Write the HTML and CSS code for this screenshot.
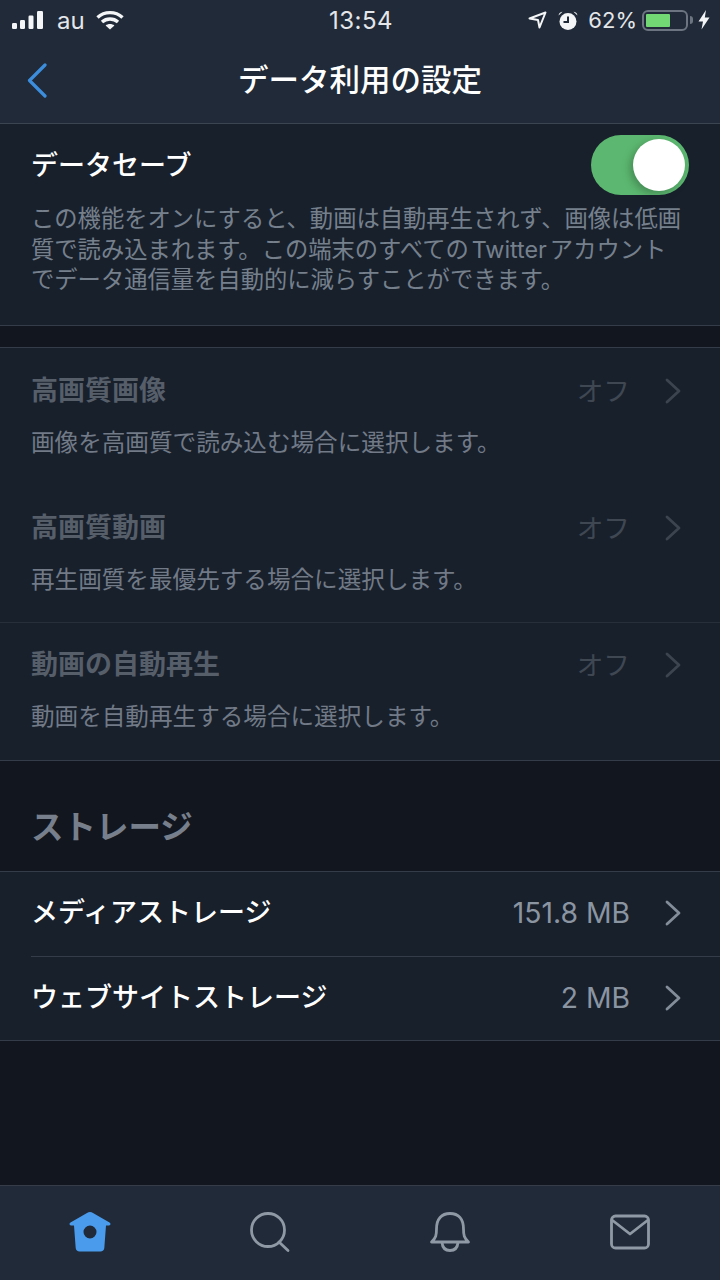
FILE: index.html
```html
<!DOCTYPE html>
<html lang="ja">

<head>
  <meta charset="UTF-8" />
  <meta name="viewport" content="width=device-width, initial-scale=1" />
  <title>データ利用の設定</title>
  <link rel="stylesheet" href="styles.css">
</head>

<body>
  <div class="app">
    <header class="top-bar">
      <div class="status-bar">
        <div class="status-left">
          <svg class="ic-signal" width="32" height="20" viewBox="0 0 32 20">
            <rect x="0" y="13" width="5" height="6" rx="1.2" />
            <rect x="8" y="10" width="5" height="9" rx="1.2" />
            <rect x="16.5" y="5.5" width="5" height="13.5" rx="1.2" />
            <rect x="25" y="1" width="6" height="18" rx="1.2" />
          </svg>
          <span class="carrier">au</span>
          <svg class="ic-wifi" width="28" height="20" viewBox="0 0 28 20">
            <path d="M1.5 7.5 C8.5 1 19.5 1 26.5 7.5" />
            <path d="M6 12 C10.5 8 17.5 8 22 12" />
            <path class="wifi-dot" d="M14 19.5 L9.6 15.4 C12 13.4 16 13.4 18.4 15.4 Z" />
          </svg>
        </div>
        <div class="status-time">13:54</div>
        <div class="status-right">
          <svg width="19" height="18" viewBox="0 0 19 18">
            <path class="ic-line" d="M1.5 7.5 L17.5 1.5 L11.5 16.5 L10 9 Z" />
          </svg>
          <svg class="ic-alarm" width="20" height="19" viewBox="0 0 20 19">
            <circle cx="10" cy="10.5" r="8.5" />
            <path class="alarm-hand" d="M10 5.5 V11 H5.5" />
            <path d="M0.5 4.5 C1 2 2.5 1 4.5 0.8 Z" />
            <path d="M19.5 4.5 C19 2 17.5 1 15.5 0.8 Z" />
          </svg>
          <span class="battery-pct">62%</span>
          <div class="battery">
            <div class="battery-fill" style="width: 62%"></div>
          </div>
          <div class="battery-nub"></div>
          <svg class="ic-bolt" width="12" height="20" viewBox="0 0 12 20">
            <path d="M8 0 L0.5 11.5 H5 L3.5 19.5 L11.5 7.5 H6.8 Z" />
          </svg>
        </div>
      </div>

      <nav class="nav-bar">
        <a class="back-btn" href="#">
          <svg width="20" height="35" viewBox="0 0 20 35">
            <path d="M18 2 L2.5 17.5 L18 33" />
          </svg>
        </a>
        <h1 class="nav-title">データ利用の設定</h1>
      </nav>
    </header>

    <section class="group group-save">
      <div class="row-head">
        <div class="row-title">データセーブ</div>
        <div class="toggle">
          <div class="toggle-knob"></div>
        </div>
      </div>
      <p class="save-desc">この機能をオンにすると、動画は自動再生されず、画像は低画質で読み込まれます。この端末のすべての<span class="latin">Twitter</span>アカウントでデータ通信量を自動的に減らすことができます。</p>
    </section>

    <section class="group group-quality">
      <div class="quality-row">
        <div class="row-head">
          <div class="row-title">高画質画像</div>
          <div class="row-value">オフ</div>
          <svg class="chevron" width="16" height="26" viewBox="0 0 16 26">
            <path d="M2 2 L14 13 L2 24" />
          </svg>
        </div>
        <p class="quality-desc">画像を高画質で読み込む場合に選択します。</p>
      </div>
      <div class="quality-row">
        <div class="row-head">
          <div class="row-title">高画質動画</div>
          <div class="row-value">オフ</div>
          <svg class="chevron" width="16" height="26" viewBox="0 0 16 26">
            <path d="M2 2 L14 13 L2 24" />
          </svg>
        </div>
        <p class="quality-desc">再生画質を最優先する場合に選択します。</p>
      </div>
      <div class="quality-row has-line">
        <div class="row-head">
          <div class="row-title">動画の自動再生</div>
          <div class="row-value">オフ</div>
          <svg class="chevron" width="16" height="26" viewBox="0 0 16 26">
            <path d="M2 2 L14 13 L2 24" />
          </svg>
        </div>
        <p class="quality-desc">動画を自動再生する場合に選択します。</p>
      </div>
    </section>

    <h2 class="section-label">ストレージ</h2>

    <section class="group group-storage">
      <a class="storage-row" href="#">
        <span class="row-title">メディアストレージ</span>
        <span class="storage-value">151.8 MB</span>
        <svg class="chevron" width="16" height="26" viewBox="0 0 16 26">
          <path d="M2 2 L14 13 L2 24" />
        </svg>
      </a>
      <a class="storage-row has-line" href="#">
        <span class="row-title">ウェブサイトストレージ</span>
        <span class="storage-value">2 MB</span>
        <svg class="chevron" width="16" height="26" viewBox="0 0 16 26">
          <path d="M2 2 L14 13 L2 24" />
        </svg>
      </a>
    </section>

    <div class="spacer"></div>

    <footer class="tab-bar">
      <a class="tab" href="#">
        <svg width="44" height="42" viewBox="0 0 44 42">
          <path class="home-fill" fill-rule="evenodd" d="M22 1 C23 1 24 1.4 25 2 L41.5 11.5 C43 12.4 42.8 14.4 41 14.4 H38 L36.3 37 C36.1 39.3 34.6 40.5 32.5 40.5 H11.5 C9.4 40.5 7.9 39.3 7.7 37 L6 14.4 H3 C1.2 14.4 1 12.4 2.5 11.5 L19 2 C20 1.4 21 1 22 1 Z M22 14.5 A6.5 6.5 0 1 0 22 27.5 A6.5 6.5 0 1 0 22 14.5 Z" />
        </svg>
      </a>
      <a class="tab" href="#">
        <svg class="ic-tab" width="44" height="42" viewBox="0 0 44 42">
          <circle cx="20" cy="19" r="16.5" />
          <path d="M31 31 L40 39.5" />
        </svg>
      </a>
      <a class="tab" href="#">
        <svg class="ic-tab" width="44" height="42" viewBox="0 0 44 42">
          <path d="M3.5 31 C8 27 8.5 24 8.5 18 C8.5 8 13.5 2.5 22 2.5 C30.5 2.5 35.5 8 35.5 18 C35.5 24 36 27 40.5 31 Z" />
          <path d="M14 31.5 C14.5 37 17.5 39.5 22 39.5 C26.5 39.5 29.5 37 30 31.5" />
        </svg>
      </a>
      <a class="tab" href="#">
        <svg class="ic-tab" width="44" height="42" viewBox="0 0 44 42">
          <rect x="3.5" y="5" width="37" height="32" rx="4" />
          <path d="M4 9 L22 23 L40 9" />
        </svg>
      </a>
    </footer>
  </div>
</body>

</html>
```

FILE: styles.css
```css
* {
  margin: 0;
  padding: 0;
  box-sizing: border-box;
  font-family: Inter, "Noto Sans CJK JP", sans-serif;
}

body {
  background-color: #12161e;
  color: white;
}

a {
  color: inherit;
  text-decoration: none;
}

.app {
  width: 720px;
  height: 1280px;
  display: flex;
  flex-direction: column;
  overflow: hidden;
}

/* status bar + nav */
.top-bar {
  background-color: #202a38;
  border-bottom: 1px solid #3b4451;
  height: 124px;
}

.status-bar {
  height: 40px;
  padding: 0 10px 0 12px;
  display: grid;
  grid-template-columns: 1fr auto 1fr;
  align-items: center;
  color: #e4e6e9;
  font-size: 24px;
}

.status-left {
  display: flex;
  align-items: center;
}

.ic-signal {
  fill: #f4f5f6;
}

.carrier {
  margin-left: 13px;
}

.ic-wifi {
  margin-left: 11px;
  fill: none;
  stroke: #f4f5f6;
  stroke-width: 3.4;
}

.wifi-dot {
  fill: #f4f5f6;
  stroke: none;
}

.status-time {
  text-align: center;
  letter-spacing: 0.5px;
}

.status-right {
  display: flex;
  align-items: center;
  justify-content: flex-end;
}

.ic-line {
  fill: none;
  stroke: #f4f5f6;
  stroke-width: 2;
  stroke-linejoin: round;
}

.ic-alarm {
  margin-left: 11px;
  fill: #f4f5f6;
}

.alarm-hand {
  fill: none;
  stroke: #202a38;
  stroke-width: 2;
}

.battery-pct {
  margin-left: 10px;
  font-size: 22px;
}

.battery {
  width: 46px;
  height: 21px;
  margin-left: 5px;
  padding: 2px;
  border: 2px solid #6b7480;
  border-radius: 6px;
}

.battery-fill {
  height: 100%;
  background-color: #71d873;
  border-radius: 1px;
}

.battery-nub {
  width: 3px;
  height: 8px;
  margin-left: 2px;
  background-color: #6b7480;
  border-radius: 0 3px 3px 0;
}

.ic-bolt {
  margin-left: 5px;
  fill: #f4f5f6;
}

.nav-bar {
  height: 83px;
  padding-bottom: 4px;
  display: flex;
  align-items: center;
  justify-content: center;
  position: relative;
}

.back-btn {
  position: absolute;
  left: 27px;
  top: 23px;
  display: flex;
}

.back-btn svg {
  fill: none;
  stroke: #3d8ddd;
  stroke-width: 3.2;
  stroke-linecap: round;
  stroke-linejoin: round;
}

.nav-title {
  font-size: 30.5px;
  font-weight: 500;
  line-height: 34px;
}

/* groups */
.group {
  background-color: #18202c;
  padding-left: 31px;
}

.row-head {
  display: flex;
  align-items: center;
}

.row-title {
  flex: 1;
  font-size: 27px;
  font-weight: 500;
  line-height: 34px;
}

.group-save {
  height: 202px;
  padding-top: 11px;
  padding-right: 31px;
  border-bottom: 1px solid #333c48;
}

.group-save .row-title {
  padding-top: 2px;
}

.toggle {
  width: 98px;
  height: 60px;
  padding: 4px;
  display: flex;
  justify-content: flex-end;
  background-color: #5cb870;
  border-radius: 30px;
}

.toggle-knob {
  width: 52px;
  height: 52px;
  background-color: white;
  border-radius: 50%;
  box-shadow: -3px 3px 8px rgba(0, 0, 0, 0.25);
}

.save-desc {
  margin-top: 9px;
  padding-right: 2px;
  font-size: 23.3px;
  line-height: 30.5px;
  color: #76808c;
}

.latin {
  margin: 0 3px;
}

.group-quality {
  margin-top: 21px;
  height: 414px;
  padding-left: 0;
  border-top: 1px solid #333c48;
  border-bottom: 1px solid #333c48;
}

.quality-row {
  height: 137px;
  padding: 26px 39px 0 31px;
}

.quality-row.has-line {
  padding-top: 25px;
  border-top: 1px solid #272f3b;
}

.quality-row .row-title {
  font-weight: 700;
  color: #565e6a;
}

.row-value {
  font-size: 26.7px;
  line-height: 34px;
  color: #3f4752;
  margin-right: 35px;
}

.quality-row .chevron {
  stroke: #3c444f;
}

.quality-desc {
  margin-top: 18px;
  font-size: 23.6px;
  line-height: 34px;
  color: #717a86;
}

.chevron {
  fill: none;
  stroke: #838d9a;
  stroke-width: 2.8;
  stroke-linecap: round;
  stroke-linejoin: round;
}

.section-label {
  height: 110px;
  padding: 48px 31px 0;
  font-size: 32.5px;
  font-weight: 700;
  line-height: 38px;
  color: #767f8b;
}

.group-storage {
  border-top: 1px solid #333c48;
  border-bottom: 1px solid #333c48;
}

.storage-row {
  height: 84px;
  padding: 0 39px 2px 0;
  display: flex;
  align-items: center;
}

.storage-row.has-line {
  border-top: 1px solid #333c48;
}

.storage-value {
  margin-right: 35px;
  font-size: 28.3px;
  color: #8b95a2;
}

.spacer {
  flex: 1;
}

/* tab bar */
.tab-bar {
  height: 95px;
  display: flex;
  background-color: #202a38;
  border-top: 1px solid #363d49;
}

.tab {
  flex: 1;
  display: flex;
  justify-content: center;
  padding-top: 25px;
}

.home-fill {
  fill: #4a9bec;
}

.ic-tab {
  fill: none;
  stroke: #8f98a5;
  stroke-width: 2.8;
  stroke-linecap: round;
  stroke-linejoin: round;
}
```
